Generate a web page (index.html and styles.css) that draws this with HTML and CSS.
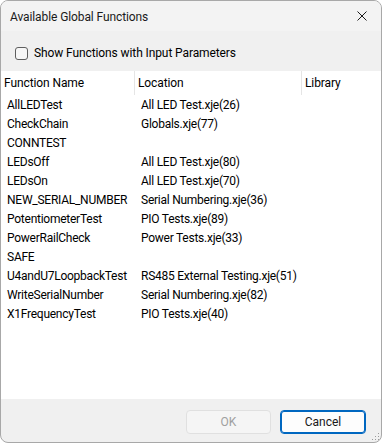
FILE: index.html
```html
<!DOCTYPE html>
<html>
<head>
    <title>Available Global Functions</title>
    <link rel="stylesheet" href="styles.css">
</head>
<body>
    <div class="window">
        <div class="titlebar">
            <span class="title">Available Global Functions</span>
            <svg class="close" width="10" height="10" viewBox="0 0 10 10">
                <path d="M0.5 0.5 L9.5 9.5 M9.5 0.5 L0.5 9.5" stroke="#1a1a1a" stroke-width="1" fill="none"/>
            </svg>
        </div>

        <div class="options">
            <label class="check">
                <span class="box"></span>
                Show Functions with Input Parameters
            </label>
        </div>

        <div class="list">
            <div class="head">
                <div class="col name">Function Name</div>
                <div class="col loc">Location</div>
                <div class="col lib">Library</div>
            </div>
            <div class="rows">
                <div class="row"><span class="fn">AllLEDTest</span><span class="file">All LED Test.xje(26)</span></div>
                <div class="row"><span class="fn">CheckChain</span><span class="file">Globals.xje(77)</span></div>
                <div class="row"><span class="fn">CONNTEST</span><span class="file"></span></div>
                <div class="row"><span class="fn">LEDsOff</span><span class="file">All LED Test.xje(80)</span></div>
                <div class="row"><span class="fn">LEDsOn</span><span class="file">All LED Test.xje(70)</span></div>
                <div class="row"><span class="fn">NEW_SERIAL_NUMBER</span><span class="file">Serial Numbering.xje(36)</span></div>
                <div class="row"><span class="fn">PotentiometerTest</span><span class="file">PIO Tests.xje(89)</span></div>
                <div class="row"><span class="fn">PowerRailCheck</span><span class="file">Power Tests.xje(33)</span></div>
                <div class="row"><span class="fn">SAFE</span><span class="file"></span></div>
                <div class="row"><span class="fn">U4andU7LoopbackTest</span><span class="file">RS485 External Testing.xje(51)</span></div>
                <div class="row"><span class="fn">WriteSerialNumber</span><span class="file">Serial Numbering.xje(82)</span></div>
                <div class="row"><span class="fn">X1FrequencyTest</span><span class="file">PIO Tests.xje(40)</span></div>
            </div>
        </div>

        <div class="footer">
            <button class="btn" disabled>OK</button>
            <button class="btn primary">Cancel</button>
            <svg class="grip" width="9" height="9" viewBox="0 0 9 9">
                <rect x="7" y="1" width="1" height="1" fill="#9a9a9a"/>
                <rect x="4" y="4" width="1" height="1" fill="#9a9a9a"/>
                <rect x="7" y="4" width="1" height="1" fill="#9a9a9a"/>
                <rect x="1" y="7" width="1" height="1" fill="#9a9a9a"/>
                <rect x="4" y="7" width="1" height="1" fill="#9a9a9a"/>
                <rect x="7" y="7" width="1" height="1" fill="#9a9a9a"/>
            </svg>
        </div>
    </div>
</body>
</html>
```

FILE: styles.css
```css
body {
    margin: 0;
    padding: 0;
    background: #ffffff;
    font-family: Roboto, "Liberation Sans", sans-serif;
    font-size: 12px;
    letter-spacing: -0.1px;
    color: #000000;
}
.window {
    width: 382px;
    height: 443px;
    box-sizing: border-box;
    border: 1px solid #a8a8a8;
    border-radius: 8px;
    overflow: hidden;
    display: flex;
    flex-direction: column;
    background-color: #f0f0f0;
}
.titlebar {
    height: 30px;
    flex: none;
    display: flex;
    align-items: center;
    justify-content: space-between;
    padding: 0 10px 0 9px;
    background-color: #f3f3f3;
    color: #1a1a1a;
}
.title {
    padding-top: 1px;
}
.close {
    margin-right: 4px;
}
.options {
    height: 40px;
    flex: none;
    display: flex;
    align-items: center;
    padding-left: 14px;
}
.check {
    display: flex;
    align-items: center;
    gap: 6px;
    padding-top: 4px;
}
.box {
    width: 11px;
    height: 11px;
    border: 1px solid #5f5f5f;
    border-radius: 3px;
    background-color: #f7f7f7;
}
.list {
    height: 328px;
    flex: none;
    background-color: #ffffff;
}
.head {
    height: 24px;
    display: flex;
}
.col {
    line-height: 24px;
    padding-left: 3px;
    box-sizing: border-box;
    border-right: 1px solid #e5e5e5;
}
.col.name {
    width: 134px;
}
.col.loc {
    width: 167px;
}
.col.lib {
    flex: 1;
    border-right: none;
}
.rows {
    padding-top: 1px;
}
.row {
    display: flex;
    height: 19px;
    line-height: 19px;
    letter-spacing: -0.25px;
}
.row span {
    flex: none;
    box-sizing: border-box;
    white-space: nowrap;
    overflow: hidden;
}
.fn {
    width: 134px;
    padding-left: 6px;
}
.file {
    width: 167px;
    padding-left: 6px;
}
.footer {
    flex: 1;
    display: flex;
    justify-content: flex-end;
    align-items: flex-start;
    gap: 9px;
    padding: 11px 15px 0 0;
    position: relative;
}
.btn {
    width: 85px;
    height: 24px;
    box-sizing: border-box;
    font-family: inherit;
    font-size: 12px;
    border-radius: 4px;
    border: 1px solid #e0e0e0;
    background-color: #f5f5f5;
    color: #a0a0a0;
}
.btn.primary {
    width: 86px;
    border: 1px solid #0067c0;
    box-shadow: inset 0 0 0 1px #0067c0;
    background-color: #fdfdfd;
    color: #1a1a1a;
}
.grip {
    position: absolute;
    right: 1px;
    bottom: 1px;
}
```
